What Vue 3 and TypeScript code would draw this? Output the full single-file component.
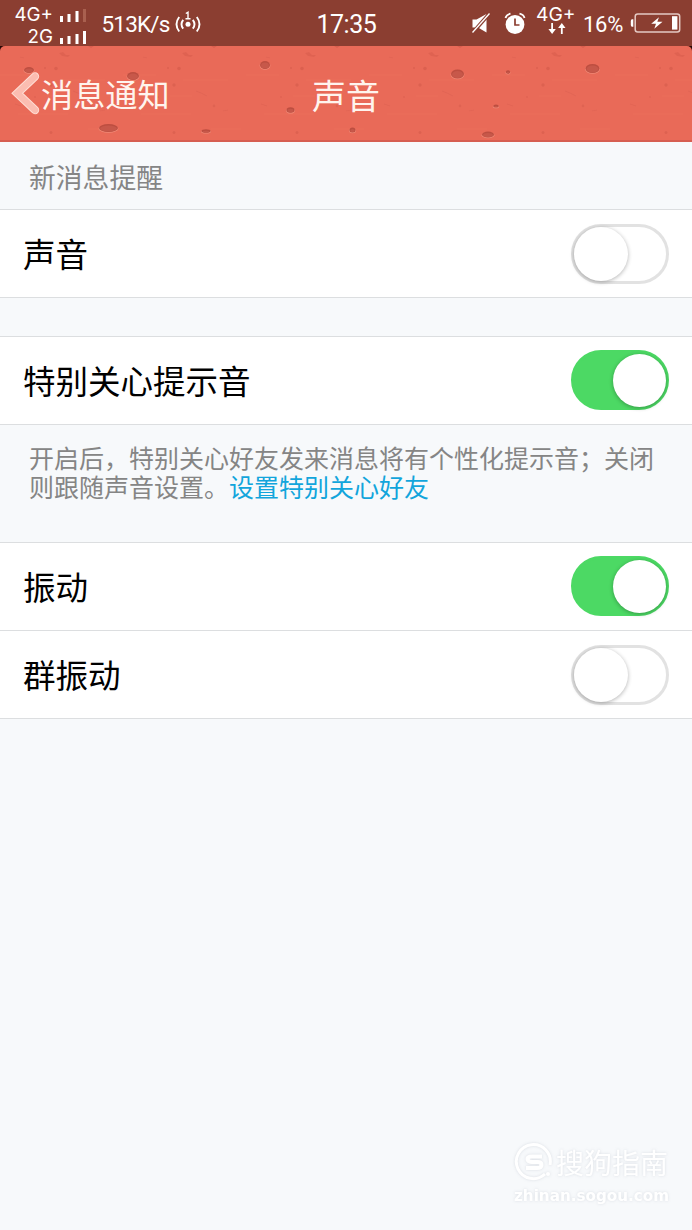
<script setup lang="ts">
import { reactive } from 'vue'

interface Setting {
  label: string
  on: boolean
}

const sound = reactive<Setting>({ label: '声音', on: false })
const special = reactive<Setting>({ label: '特别关心提示音', on: true })
const vibration = reactive<Setting[]>([
  { label: '振动', on: true },
  { label: '群振动', on: false },
])

const groups: { id: string; items: Setting[] }[] = [
  { id: 'sound', items: [sound] },
  { id: 'special', items: [special] },
  { id: 'vibration', items: vibration },
]

// cx, cy, rx, ry of the dark pits in the header texture
const pits: number[][] = [
  [29, 24, 5, 3], [133, 30, 6, 4], [108.5, 82, 9.5, 4], [206, 85, 4.5, 1.8],
  [265, 19, 5, 4], [290.5, 64, 4, 2.8], [352.5, 84, 3, 2.5], [457.5, 28, 6.5, 4.5],
  [508, 26, 2.2, 1.8], [496, 60, 2.8, 1.6], [488, 88.5, 6, 3], [592.5, 22.5, 7, 4.5],
]
</script>

<template>
  <div class="screen">
    <div class="status">
      <div class="signals">
        <div class="sig"><span>4G+</span>
          <svg width="28" height="16" viewBox="0 0 28 16">
            <g fill="#fff"><rect x="1" y="9" width="3" height="6" /><rect x="8.5" y="7" width="3" height="8" /><rect x="16.5" y="4" width="3" height="11" /></g>
            <rect x="24" y="2" width="3" height="13" fill="#a9604f" />
          </svg>
        </div>
        <div class="sig"><span>2G</span>
          <svg width="28" height="16" viewBox="0 0 28 16">
            <g fill="#fff"><rect x="1" y="9" width="3" height="6" /><rect x="8.5" y="7" width="3" height="8" /><rect x="16.5" y="5" width="3" height="10" /><rect x="24" y="2" width="3" height="13" /></g>
          </svg>
        </div>
      </div>
      <span class="speed">513K/s</span>
      <svg class="hotspot" width="26" height="24" viewBox="0 0 26 24">
        <g fill="none" stroke="#fff" stroke-width="1.9">
          <path d="M4.2 7 Q-1.2 14.2 4.2 21.5M8.2 9.8 Q4.8 14.2 8.2 18.6M17.8 9.8 Q21.2 14.2 17.8 18.6M21.8 7 Q27.2 14.2 21.8 21.5" />
          <path d="M10.8 3.5 L13 2.3 V8.5M10.5 8.8 H15.5" stroke-width="1.4" />
        </g>
        <circle cx="13" cy="14.3" r="2.5" fill="#fff" />
      </svg>
      <span class="clock">17:35</span>
      <svg class="mute" width="20" height="22" viewBox="0 0 20 22">
        <path d="M1.5 7.5 H5.5 L15.5 2 V20.5 L7 15.5 H1.5 Z" fill="#fff" />
        <path d="M1.5 21 L18.5 1.5" stroke="#8b3e31" stroke-width="3.6" />
        <path d="M1.5 20.5 L18.5 1.5" stroke="#fff" stroke-width="1.3" />
      </svg>
      <svg class="alarm" width="22" height="23" viewBox="0 0 22 23">
        <circle cx="11" cy="12.5" r="9.4" fill="#fff" />
        <path d="M1.5 6 Q2.3 2.5 6.5 1.7M15.5 1.7 Q19.7 2.5 20.5 6" fill="none" stroke="#fff" stroke-width="1.8" />
        <path d="M11 6.5 V13 H15.5" fill="none" stroke="#8b3e31" stroke-width="1.7" />
      </svg>
      <div class="data">
        <span>4G+</span>
        <svg width="18" height="12" viewBox="0 0 18 12">
          <path d="M3.2 0 H5 V6 H7.8 L4.1 11 L.4 6 H3.2Z M12.9 11 H14.7 V5 H17.5 L13.8 0 L10.1 5 H12.9Z" fill="#fff" />
        </svg>
      </div>
      <span class="percent">16%</span>
      <svg class="battery" width="51" height="20" viewBox="0 0 51 20">
        <path d="M3.3 6.3 H2 Q.8 6.3 .8 8 V12 Q.8 13.7 2 13.7 H3.3Z" fill="#fff" />
        <rect x="5.2" y="1" width="44.5" height="18" rx="2.5" fill="none" stroke="#e5c9c3" stroke-width="1.5" />
        <path d="M29 4.2 L21.2 10.8 H26 L24.3 15.7 L32.5 8.8 H27.3Z" fill="#fff" />
        <rect x="42" y="3.2" width="5.4" height="13.4" fill="#fff" />
      </svg>
    </div>

    <div class="header-wrap">
      <header class="header">
        <svg class="texture" width="692" height="96" viewBox="0 0 692 96">
          <defs>
            <pattern id="specks" width="123" height="96" patternUnits="userSpaceOnUse">
              <g fill="#d65b4b">
                <path d="M59 7 l4 -1 3 3 4 0 -2 2 -6 -1z" opacity=".55" />
                <path d="M83 1 h4 M88 0 l6 0 -3 2z" opacity=".8" />
                <circle cx="45" cy="22" r="1.2" opacity=".5" />
                <circle cx="56" cy="22.5" r="1.8" opacity=".7" />
                <circle cx="51" cy="39" r="1.7" opacity=".6" />
                <circle cx="35" cy="51" r="1.1" opacity=".4" />
                <circle cx="91" cy="60" r="1.4" opacity=".5" />
                <circle cx="51" cy="86.5" r="1.5" opacity=".6" />
              </g>
              <path d="M73 45 l5 2 6 3M15 58 l6 2M100 65 l5 -1M20 11 l4 1" fill="none" stroke="#d65b4b" stroke-width="1.2" opacity=".3" />
              <path d="M0 29 h33M60 34 h45M18 68 h50M88 83 h30M47 50 h22" fill="none" stroke="#f17a66" stroke-width="2" opacity=".12" />
            </pattern>
          </defs>
          <rect width="692" height="96" fill="url(#specks)" />
          <g v-for="(p, i) in pits" :key="i">
            <ellipse :cx="p[0]" :cy="p[1] + 0.7" :rx="p[2] + 0.4" :ry="p[3]" fill="#f08a77" />
            <ellipse :cx="p[0]" :cy="p[1]" :rx="p[2]" :ry="p[3]" fill="#bd4e40" />
            <ellipse :cx="p[0]" :cy="p[1] + 0.5" :rx="p[2] - 1" :ry="p[3] - 1" fill="#c7584a" />
          </g>
        </svg>
        <div class="back">
          <svg width="30" height="46" viewBox="0 0 30 46">
            <path d="M24 6.5 L6.3 23.3 L24 40" fill="none" stroke="#ffded5" stroke-width="8.4" stroke-linecap="round" />
            <path d="M24 6.5 L6.3 23.3 L24 40" fill="none" stroke="#fbbdb1" stroke-width="6.4" stroke-linecap="round" />
          </svg>
          <span>消息通知</span>
        </div>
        <h1>声音</h1>
      </header>
    </div>

    <main>
      <p class="caption">新消息提醒</p>
      <template v-for="g in groups" :key="g.id">
        <section class="group" :class="g.id">
          <div v-for="s in g.items" :key="s.label" class="row">
            <span>{{ s.label }}</span>
            <button class="switch" :class="{ on: s.on }" role="switch" :aria-checked="s.on" :aria-label="s.label" @click="s.on = !s.on"><i></i></button>
          </div>
        </section>
        <div v-if="g.id === 'special'" class="note">
          <div>开启后，特别关心好友发来消息将有个性化提示音；关闭</div>
          <div><span>则跟随声音设置。</span><a>设置特别关心好友</a></div>
        </div>
      </template>
    </main>

    <div class="watermark">
      <div class="brand">
        <svg width="40" height="40" viewBox="0 0 40 40" fill="none" stroke="#fff">
          <path d="M31 32 A17 17 0 1 1 36 23" stroke-width="3" />
          <path d="M28 14.5 H18 Q13.5 14.5 13.5 17 T18 20 H23.5 Q27.5 20 27.5 23 T23 26 H12" stroke-width="4" />
          <circle cx="34" cy="32" r="2" fill="#fff" stroke="none" />
        </svg>
        <span>搜狗指南</span>
      </div>
      <div class="site">zhinan.sogou.com</div>
    </div>
  </div>
</template>

<style>
body {
  margin: 0;
  background: #f7f9fb;
}
</style>

<style scoped>
.screen {
  position: relative;
  width: 692px;
  height: 1230px;
  overflow: hidden;
  background: #f7f9fb;
  font-family: "Noto Sans CJK SC", sans-serif;
  color: #000;
}
svg {
  display: block;
  flex: none;
}
p, h1 {
  margin: 0;
  font-weight: 400;
}
.status {
  display: flex;
  align-items: flex-start;
  height: 46px;
  background: #8b3e31;
  color: #fff;
  font-family: Roboto, sans-serif;
  white-space: nowrap;
}
.signals {
  width: 87px;
  padding-top: 4px;
}
.sig {
  display: flex;
  justify-content: flex-end;
  gap: 6px;
  height: 22px;
  font-family: Inter, sans-serif;
  font-size: 18.8px;
  line-height: 22px;
}
.sig svg {
  margin-top: 3px;
}
.speed {
  width: 68px;
  margin-left: 14.5px;
  font-size: 22.5px;
  letter-spacing: -0.8px;
  line-height: 49px;
}
.hotspot {
  margin: 10px 0 0 5px;
}
.clock {
  width: 60px;
  margin-left: 116px;
  font-size: 25px;
  letter-spacing: -0.5px;
  line-height: 50px;
}
.mute {
  margin: 12px 0 0 94.5px;
}
.alarm {
  margin: 12px 0 0 13px;
}
.data {
  width: 42px;
  margin-left: 10px;
  padding-top: 4px;
  font-family: Inter, sans-serif;
  font-size: 19.3px;
  line-height: 21px;
}
.data svg {
  margin: -2px 0 0 12px;
}
.percent {
  width: 43px;
  margin-left: 5px;
  font-size: 22px;
  letter-spacing: -0.3px;
  line-height: 49px;
}
.battery {
  margin: 13px 0 0 4px;
}
.header-wrap {
  background: #2a0906;
}
.header {
  position: relative;
  display: grid;
  grid-template-columns: 1fr auto 1fr;
  align-items: center;
  box-sizing: border-box;
  height: 96px;
  background: #e96a58;
  border-bottom: 2px solid #d65e51;
  border-radius: 5px 5px 0 0;
  color: #fff4ee;
}
.texture {
  position: absolute;
  inset: 0;
}
.back {
  position: relative;
  display: flex;
  align-items: center;
  padding-left: 11px;
  font-size: 32.2px;
}
.header h1 {
  position: relative;
  font-size: 34px;
  line-height: 50px;
  padding-top: 3px;
}
.caption {
  height: 67px;
  padding-left: 29px;
  font-size: 26.8px;
  line-height: 69px;
  color: #858585;
}
.group {
  border-top: 1px solid #dcdee0;
  background: #fff;
}
.special {
  margin-top: 38px;
}
.row {
  display: flex;
  align-items: center;
  justify-content: space-between;
  box-sizing: border-box;
  height: 88px;
  padding: 0 23px;
  border-bottom: 1px solid #dcdee0;
  font-size: 32.5px;
}
.row span {
  padding-bottom: 2px;
}
.switch {
  box-sizing: border-box;
  width: 98px;
  height: 60px;
  padding: 0;
  border: 3px solid #e2e2e2;
  border-radius: 30px;
  background: #fff;
}
.switch i {
  display: block;
  width: 54px;
  height: 54px;
  border-radius: 50%;
  background: #fff;
  box-shadow: 0 1px 4px rgba(0, 0, 0, 0.3);
}
.switch.on {
  margin-bottom: 1px;
  border-color: #4cd964;
  background: #4cd964;
}
.switch.on i {
  width: 53px;
  height: 53px;
  margin-left: 39px;
}
.note {
  box-sizing: border-box;
  width: 692px;
  height: 117px;
  padding: 18px 29px 0;
  font-size: 25px;
  line-height: 29px;
  white-space: nowrap;
  color: #858585;
}
.note a {
  color: #12a5dc;
}
.watermark {
  position: absolute;
  left: 514px;
  top: 1142px;
  width: 156px;
  color: #fff;
  filter: drop-shadow(0 0 1.5px rgba(80, 90, 110, 0.17));
}
.brand {
  display: flex;
  align-items: center;
  gap: 2px;
  height: 40px;
  font-size: 28px;
}
.site {
  margin-top: 2px;
  font: bold 15.2px/24px "DejaVu Sans", sans-serif;
  white-space: nowrap;
}
</style>
